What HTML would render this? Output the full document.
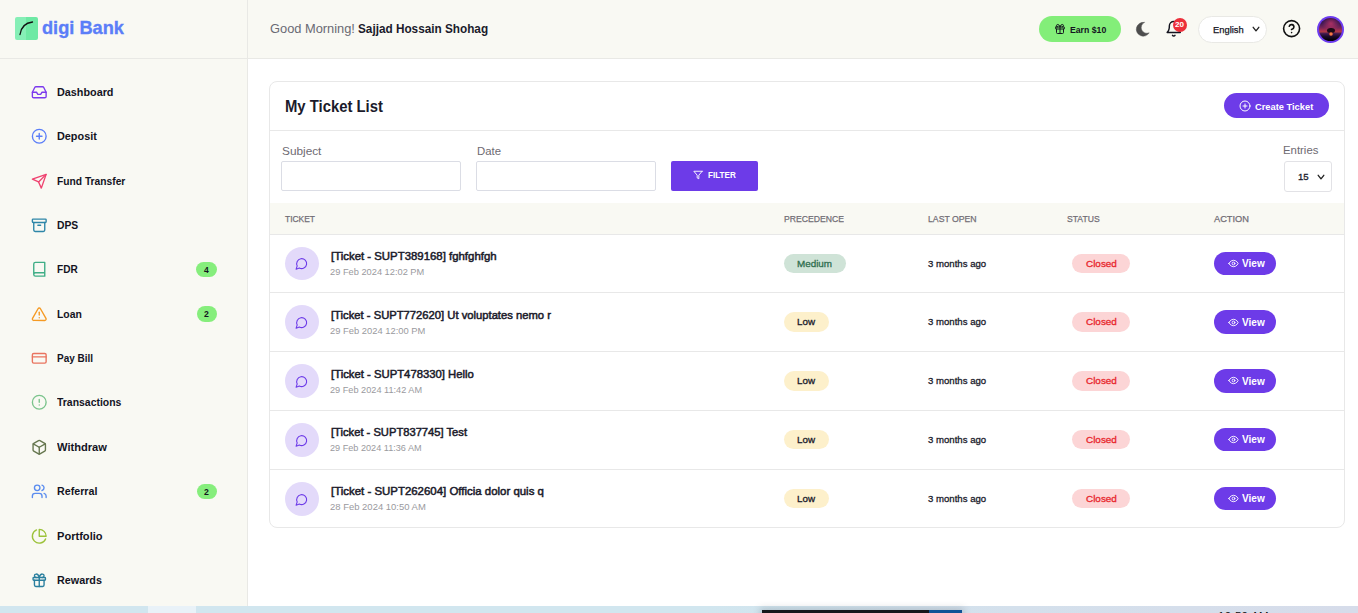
<!DOCTYPE html>
<html lang="en">
<head>
<meta charset="utf-8">
<title>My Ticket List - digi Bank</title>
<style>
*{box-sizing:border-box;margin:0;padding:0}
html,body{width:1358px;height:613px;overflow:hidden;background:#fff;font-family:"Liberation Sans",sans-serif;color:#1b1b2b}
.ic{position:absolute;display:block;fill:none;stroke:currentColor;stroke-linecap:round;stroke-linejoin:round;overflow:visible}
.fx{position:absolute;white-space:nowrap;line-height:1;display:block;transform-origin:0 50%}
b,.b{font-weight:700}
#side{position:absolute;left:0;top:0;width:248px;height:606px;background:#f9f9f3;border-right:1px solid #e9e9e5}
#logo{position:absolute;left:0;top:0;width:247px;height:59px;border-bottom:1px solid #e9e9e5}
#logo .sq{position:absolute;left:15px;top:17px;width:23px;height:23px;border-radius:2px;background:linear-gradient(90deg,#86efb6 0,#86efb6 50%,#6ee9a4 50%,#6ee9a4 100%)}
.badge{position:absolute;left:196px;width:21px;height:15px;border-radius:8px;background:#86ee7c}
#top{position:absolute;left:248px;top:0;width:1110px;height:59px;background:#f9f9f3;border-bottom:1px solid #e9e9e5}
#earn{position:absolute;left:791px;top:16px;width:82px;height:26px;border-radius:13px;background:#83ee79;color:#14141f}
#nb{position:absolute;left:924.7px;top:17.9px;width:14.6px;height:14.6px;border-radius:50%;background:#ec2f3a}
#lang{position:absolute;left:950px;top:16px;width:69px;height:27px;border-radius:13.5px;background:#fff;border:1px solid #e9e9e5}
#ava{position:absolute;left:1069px;top:16px;width:27px;height:27px;border-radius:50%;background:#6d3cf0;overflow:hidden}
#ava i{position:absolute;left:2px;top:2px;width:23px;height:23px;border-radius:50%;overflow:hidden;background:radial-gradient(ellipse 9px 8px at 52% 24%,rgba(205,55,105,.75) 0,rgba(205,55,105,0) 100%),linear-gradient(180deg,#221040 0,#3a1852 22%,#742456 42%,#a43050 54%,#b03a44 60%,#40194f 68%,#1c0b2a 80%,#07020a 94%)}
#ava i:before{content:"";position:absolute;left:7.5px;top:9.5px;width:8px;height:5.5px;border-radius:50%;background:#1a0916}
#ava i:after{content:"";position:absolute;left:9.5px;top:13.5px;width:4px;height:4px;border-radius:50%;background:radial-gradient(circle,#ffa050 0,#e8603a 45%,rgba(200,60,60,0) 100%)}
#main{position:absolute;left:248px;top:59px;width:1110px;height:547px;background:#fff}
#card{position:absolute;left:21px;top:22px;width:1076px;height:447px;border:1px solid #e8e8e8;border-radius:8px;background:#fff;overflow:hidden}
#card>*{position:absolute}
.ct{left:954px;top:11px;width:105px;height:25px;border-radius:13px;background:#6d3be8;color:#fff}
.hl{left:0;top:48px;width:1074px;height:1px;background:#e8e8e8}
.in{top:79px;width:180px;height:30px;border:1px solid #dbdde5;border-radius:2px;background:#fff}
.fb{left:401px;top:79px;width:87px;height:30px;border-radius:2px;background:#6d3be8;color:#fff}
.sel{left:1014px;top:79px;width:48px;height:31px;border:1px solid #e2e2e6;border-radius:3px;background:#fff}
.th{left:0;top:121px;width:1074px;height:32px;background:#f9f9f3;border-bottom:1px solid #e8e8e8;color:#716d75}
.row{left:0;width:1074px;border-bottom:1px solid #e8e8e8}
.row>*{position:absolute}
.av{left:15px;width:34px;height:34px;border-radius:50%;background:#e3dafa;color:#6d3be8}
.pill{border-radius:10px}
.med{left:514px;width:62px;background:#cfe3d7;color:#2f6f4f}
.low{left:514px;width:45px;background:#fdf0cb;color:#1b1b2b}
.cl{left:802px;width:58px;background:#fcd5d6;color:#e8262d}
.vw{left:944px;width:62px;border-radius:12px;background:#6d3be8;color:#fff}
#tsh{position:absolute;left:762px;top:610px;width:200px;height:8px;box-shadow:0 0 7px 2px rgba(60,70,80,.22);z-index:2}
#task{position:absolute;left:0;top:606px;width:1358px;height:7px;background:linear-gradient(90deg,#d1e6ef 0,#d1e6ef 52%,#d4e0ec 75%,#d6dcea 100%);overflow:hidden}
#task i{position:absolute;display:block}
#task .a{left:148px;top:0;width:48px;height:7px;background:#e9f2f8}
#task .d{z-index:3;left:762px;top:4px;width:167px;height:3px;background:#15171b}
#task .e{z-index:3;left:929px;top:4px;width:33px;height:3px;background:#0f5296}
#task span{position:absolute;left:1218px;top:4.500px;font-size:11.5px;line-height:1;color:#111;white-space:nowrap;letter-spacing:0.3px}
</style>
</head>
<body>
<div id="side">
  <div id="logo"><div class="sq"><svg class="ic" viewBox="0 0 23 23" style="left:0;top:0;width:23px;height:23px;stroke:#111;stroke-width:1.3"><path d="M5 17.500C6 10.500 10.500 5.800 17.500 5"/></svg></div><span class="fx " id="k_logo" style="transform:scaleX(0.9792);left:42.00px;top:18.56px;font-size:18.6px;font-weight:700;color:#5b7ef8;-webkit-text-stroke:0.35px;">digi Bank</span></div>
  <svg class="ic " viewBox="0 0 24 24" style="left:30.75px;top:83.75px;width:16.5px;height:16.5px;stroke-width:2;color:#7c3aed;"><polyline points="22 12 16 12 14 15 10 15 8 12 2 12"/><path d="M5.450 5.110 2 12v6a2 2 0 0 0 2 2h16a2 2 0 0 0 2-2v-6l-3.450-6.890A2 2 0 0 0 16.760 4H7.240a2 2 0 0 0-1.790 1.110z"/></svg>
  <span class="fx " id="k_m0" style="transform:scaleX(0.9400);left:57.00px;top:87.27px;font-size:11.5px;font-weight:700;color:#14141f;">Dashboard</span>
  <svg class="ic " viewBox="0 0 24 24" style="left:30.75px;top:127.75px;width:16.5px;height:16.5px;stroke-width:2;color:#5b7ef8;"><circle cx="12" cy="12" r="10"/><path d="M8 12h8"/><path d="M12 8v8"/></svg>
  <span class="fx " id="k_m1" style="transform:scaleX(0.9436);left:57.00px;top:131.27px;font-size:11.5px;font-weight:700;color:#14141f;">Deposit</span>
  <svg class="ic " viewBox="0 0 24 24" style="left:30.75px;top:172.75px;width:16.5px;height:16.5px;stroke-width:2;color:#ef4370;"><path d="m22 2-7 20-4-9-9-4Z"/><path d="M22 2 11 13"/></svg>
  <span class="fx " id="k_m2" style="transform:scaleX(0.8912);left:57.00px;top:176.27px;font-size:11.5px;font-weight:700;color:#14141f;">Fund Transfer</span>
  <svg class="ic " viewBox="0 0 24 24" style="left:30.75px;top:216.75px;width:16.5px;height:16.5px;stroke-width:2;color:#2e86a8;"><rect width="20" height="5" x="2" y="3" rx="1"/><path d="M4 8v11a2 2 0 0 0 2 2h12a2 2 0 0 0 2-2V8"/><path d="M10 12h4"/></svg>
  <span class="fx " id="k_m3" style="transform:scaleX(0.8968);left:57.00px;top:220.27px;font-size:11.5px;font-weight:700;color:#14141f;">DPS</span>
  <svg class="ic " viewBox="0 0 24 24" style="left:30.75px;top:260.75px;width:16.5px;height:16.5px;stroke-width:2;color:#3fae86;"><path d="M4 19.500v-15A2.500 2.500 0 0 1 6.500 2H20v20H6.500a2.500 2.500 0 0 1 0-5H20"/></svg>
  <span class="fx " id="k_m4" style="transform:scaleX(0.8746);left:57.00px;top:264.27px;font-size:11.5px;font-weight:700;color:#14141f;">FDR</span>
  <div class="badge" style="left:196px;width:21px;top:262px;height:15px"></div><span class="fx " id="k_mb4" style="transform:scaleX(1.0000);left:204.00px;top:265.80px;font-size:8.5px;font-weight:700;color:#14141f;">4</span>
  <svg class="ic " viewBox="0 0 24 24" style="left:30.75px;top:305.75px;width:16.5px;height:16.5px;stroke-width:2;color:#f59a23;"><path d="m21.730 18-8-14a2 2 0 0 0-3.480 0l-8 14A2 2 0 0 0 4 21h16a2 2 0 0 0 1.730-3Z"/><path d="M12 9v4"/><path d="M12 17h.01"/></svg>
  <span class="fx " id="k_m5" style="transform:scaleX(0.9053);left:57.00px;top:309.27px;font-size:11.5px;font-weight:700;color:#14141f;">Loan</span>
  <div class="badge" style="left:197px;width:20px;top:306px;height:16px"></div><span class="fx " id="k_mb5" style="transform:scaleX(1.0223);left:204.00px;top:310.00px;font-size:8.5px;font-weight:700;color:#14141f;">2</span>
  <svg class="ic " viewBox="0 0 24 24" style="left:30.75px;top:349.75px;width:16.5px;height:16.5px;stroke-width:2;color:#e9745f;"><rect width="20" height="14" x="2" y="5" rx="2"/><line x1="2" x2="22" y1="10" y2="10"/></svg>
  <span class="fx " id="k_m6" style="transform:scaleX(0.8670);left:57.00px;top:353.27px;font-size:11.5px;font-weight:700;color:#14141f;">Pay Bill</span>
  <svg class="ic " viewBox="0 0 24 24" style="left:30.75px;top:393.75px;width:16.5px;height:16.5px;stroke-width:2;color:#7bc48c;"><circle cx="12" cy="12" r="10"/><line x1="12" x2="12" y1="8" y2="12"/><line x1="12" x2="12.010" y1="16" y2="16"/></svg>
  <span class="fx " id="k_m7" style="transform:scaleX(0.9077);left:57.00px;top:397.27px;font-size:11.5px;font-weight:700;color:#14141f;">Transactions</span>
  <svg class="ic " viewBox="0 0 24 24" style="left:30.75px;top:438.75px;width:16.5px;height:16.5px;stroke-width:2;color:#66774f;"><path d="M21 8a2 2 0 0 0-1-1.730l-7-4a2 2 0 0 0-2 0l-7 4A2 2 0 0 0 3 8v8a2 2 0 0 0 1 1.730l7 4a2 2 0 0 0 2 0l7-4A2 2 0 0 0 21 16Z"/><path d="m3.300 7 8.700 5 8.700-5"/><path d="M12 22V12"/></svg>
  <span class="fx " id="k_m8" style="transform:scaleX(0.9670);left:57.00px;top:442.27px;font-size:11.5px;font-weight:700;color:#14141f;">Withdraw</span>
  <svg class="ic " viewBox="0 0 24 24" style="left:30.75px;top:482.75px;width:16.5px;height:16.5px;stroke-width:2;color:#5b8def;"><path d="M16 21v-2a4 4 0 0 0-4-4H6a4 4 0 0 0-4 4v2"/><circle cx="9" cy="7" r="4"/><path d="M22 21v-2a4 4 0 0 0-3-3.870"/><path d="M16 3.130a4 4 0 0 1 0 7.750"/></svg>
  <span class="fx " id="k_m9" style="transform:scaleX(0.9282);left:57.00px;top:486.27px;font-size:11.5px;font-weight:700;color:#14141f;">Referral</span>
  <div class="badge" style="left:197px;width:20px;top:484px;height:15px"></div><span class="fx " id="k_mb9" style="transform:scaleX(1.0223);left:204.00px;top:488.00px;font-size:8.5px;font-weight:700;color:#14141f;">2</span>
  <svg class="ic " viewBox="0 0 24 24" style="left:30.75px;top:527.75px;width:16.5px;height:16.5px;stroke-width:2;color:#9cc23a;"><path d="M21.210 15.890A10 10 0 1 1 8 2.830"/><path d="M22 12A10 10 0 0 0 12 2v10z"/></svg>
  <span class="fx " id="k_m10" style="transform:scaleX(0.9641);left:57.00px;top:531.27px;font-size:11.5px;font-weight:700;color:#14141f;">Portfolio</span>
  <svg class="ic " viewBox="0 0 24 24" style="left:30.75px;top:571.75px;width:16.5px;height:16.5px;stroke-width:2;color:#2a7f9e;"><rect x="3" y="8" width="18" height="4" rx="1"/><path d="M12 8v13"/><path d="M19 12v7a2 2 0 0 1-2 2H7a2 2 0 0 1-2-2v-7"/><path d="M7.500 8a2.500 2.500 0 0 1 0-5A4.800 8 0 0 1 12 8a4.800 8 0 0 1 4.500-5 2.500 2.500 0 0 1 0 5"/></svg>
  <span class="fx " id="k_m11" style="transform:scaleX(0.9377);left:57.00px;top:575.27px;font-size:11.5px;font-weight:700;color:#14141f;">Rewards</span>
</div>
<div id="top">
  <span class="fx " id="k_g1" style="transform:scaleX(0.9878);left:22.00px;top:22.00px;font-size:13px;color:#6a6a74;">Good Morning!</span>
  <span class="fx " id="k_g2" style="transform:scaleX(0.9049);left:110.00px;top:22.00px;font-size:13px;font-weight:700;color:#1b1b2b;">Sajjad Hossain Shohag</span>
  <div id="earn"><svg class="ic " viewBox="0 0 24 24" style="left:15.00px;top:6.80px;width:12px;height:12px;stroke-width:2;"><rect x="3" y="8" width="18" height="4" rx="1"/><path d="M12 8v13"/><path d="M19 12v7a2 2 0 0 1-2 2H7a2 2 0 0 1-2-2v-7"/><path d="M7.500 8a2.500 2.500 0 0 1 0-5A4.800 8 0 0 1 12 8a4.800 8 0 0 1 4.500-5 2.500 2.500 0 0 1 0 5"/></svg><span class="fx " id="k_earn" style="transform:scaleX(0.8865);left:31.00px;top:8.70px;font-size:9.8px;font-weight:700;">Earn $10</span></div>
  <svg class="ic" viewBox="0 0 24 24" style="left:886.05px;top:19.65px;width:18.5px;height:18.5px;fill:#4d4d4d;stroke:#4d4d4d;stroke-width:0.6"><path d="M13.350 3.100A9 9 0 1 0 19.690 16.680 7.500 7.500 0 0 1 13.350 3.100Z"/></svg>
  <svg class="ic " viewBox="0 0 24 24" style="left:917.15px;top:19.95px;width:17.5px;height:17.5px;stroke-width:2;color:#14141f;"><path d="M6 8a6 6 0 0 1 12 0c0 7 3 9 3 9H3s3-2 3-9"/><path d="M10.300 21a1.940 1.940 0 0 0 3.400 0"/></svg>
  <div id="nb"></div><span class="fx " id="k_nb20" style="transform:scaleX(1.1500);left:927.00px;top:21.37px;font-size:7px;font-weight:700;color:#fff;">20</span>
  <div id="lang"><span class="fx " id="k_lang" style="transform:scaleX(0.9740);left:14.00px;top:7.97px;font-size:9.6px;color:#14141f;-webkit-text-stroke:0.25px;">English</span><svg class="ic" viewBox="0 0 10 8" style="left:51.50px;top:7.70px;width:10px;height:8px;stroke-width:1.35;color:#222"><path d="M2.200 2.300 5 5.800 7.800 2.300"/></svg></div>
  <svg class="ic " viewBox="0 0 24 24" style="left:1034.10px;top:19.20px;width:19.2px;height:19.2px;stroke-width:2;color:#111;"><circle cx="12" cy="12" r="10"/><path d="M9.090 9a3 3 0 0 1 5.830 1c0 2-3 3-3 3"/><path d="M12 17h.01"/></svg>
  <div id="ava"><i></i></div>
</div>
<div id="main">
  <div id="card">
    <span class="fx " id="k_title" style="transform:scaleX(0.9274);left:15.00px;top:17.36px;font-size:16px;font-weight:700;">My Ticket List</span>
    <div class="ct"><svg class="ic " viewBox="0 0 24 24" style="left:14.70px;top:7.00px;width:12px;height:12px;stroke-width:2;"><circle cx="12" cy="12" r="10"/><path d="M8 12h8"/><path d="M12 8v8"/></svg><span class="fx " id="k_create" style="transform:scaleX(0.9786);left:31.00px;top:9.36px;font-size:9.5px;font-weight:700;">Create Ticket</span></div>
    <div class="hl"></div>
    <span class="fx " id="k_lsub" style="transform:scaleX(1.0740);left:12.00px;top:64.49px;font-size:11px;color:#6e6a72;">Subject</span>
    <div class="in" style="left:11px"></div>
    <span class="fx " id="k_ldate" style="transform:scaleX(1.0332);left:207.00px;top:64.49px;font-size:11px;color:#6e6a72;">Date</span>
    <div class="in" style="left:206px"></div>
    <div class="fb"><svg class="ic " viewBox="0 0 24 24" style="left:22.20px;top:8.80px;width:10px;height:10px;stroke-width:2.2;"><polygon points="22 3 2 3 10 12.460 10 19 14 21 14 12.460 22 3"/></svg><span class="fx " id="k_filter" style="transform:scaleX(0.9370);left:37.00px;top:9.94px;font-size:8.7px;font-weight:700;">FILTER</span></div>
    <span class="fx " id="k_lent" style="transform:scaleX(1.0342);left:1013.00px;top:62.69px;font-size:11px;color:#6e6a72;">Entries</span>
    <div class="sel"><span class="fx " id="k_s15" style="transform:scaleX(0.9952);left:13.00px;top:10.39px;font-size:9.7px;color:#1b1b2b;-webkit-text-stroke:0.3px;">15</span><svg class="ic" viewBox="0 0 10 8" style="left:30.50px;top:10.70px;width:10px;height:8px;stroke-width:1.35;color:#222"><path d="M2.200 2.300 5 5.800 7.800 2.300"/></svg></div>
    <div class="th"><span class="fx " id="k_th0" style="transform:scaleX(0.8886);left:15.00px;top:10.96px;font-size:9.5px;-webkit-text-stroke:0.25px;">TICKET</span><span class="fx " id="k_th1" style="transform:scaleX(0.9082);left:514.00px;top:10.96px;font-size:9.5px;-webkit-text-stroke:0.25px;">PRECEDENCE</span><span class="fx " id="k_th2" style="transform:scaleX(0.9154);left:658.00px;top:10.96px;font-size:9.5px;-webkit-text-stroke:0.25px;">LAST OPEN</span><span class="fx " id="k_th3" style="transform:scaleX(0.9058);left:797.00px;top:10.96px;font-size:9.5px;-webkit-text-stroke:0.25px;">STATUS</span><span class="fx " id="k_th4" style="transform:scaleX(0.9752);left:944.00px;top:10.96px;font-size:9.5px;-webkit-text-stroke:0.25px;">ACTION</span></div>
    <div class="row" style="top:153px;height:58px"><div class="av" style="top:12px;height:33px"><svg class="ic " viewBox="0 0 24 24" style="left:10.35px;top:10.15px;width:13.3px;height:13.3px;stroke-width:2;"><path d="M7.900 20A9 9 0 1 0 4 16.100L2 22Z"/></svg></div><span class="fx " id="k_t0" style="transform:scaleX(1.0361);left:61.00px;top:15.69px;font-size:11px;-webkit-text-stroke:0.5px;">[Ticket - SUPT389168] fghfghfgh</span><span class="fx " id="k_d0" style="transform:scaleX(0.9966);left:60.00px;top:33.13px;font-size:9.3px;color:#9a9a9e;">29 Feb 2024 12:02 PM</span><div class="pill med" style="top:19px;height:19px"><span class="fx " id="k_p0" style="transform:scaleX(1.0380);left:13.00px;top:4.96px;font-size:9.5px;-webkit-text-stroke:0.3px;">Medium</span></div><span class="fx " id="k_a0" style="transform:scaleX(1.0102);left:658.00px;top:23.96px;font-size:9.5px;-webkit-text-stroke:0.3px;">3 months ago</span><div class="pill cl" style="top:19px;height:19px"><span class="fx " id="k_c0" style="transform:scaleX(1.0436);left:14.00px;top:4.96px;font-size:9.5px;-webkit-text-stroke:0.3px;">Closed</span></div><div class="vw" style="top:17px;height:23px"><svg class="ic " viewBox="0 0 24 24" style="left:13.50px;top:6.00px;width:11px;height:11px;stroke-width:2;"><path d="M2 12s3-7 10-7 10 7 10 7-3 7-10 7-10-7-10-7Z"/><circle cx="12" cy="12" r="3"/></svg><span class="fx " id="k_v0" style="transform:scaleX(0.9744);left:28.00px;top:7.28px;font-size:10.3px;font-weight:700;">View</span></div></div>
    <div class="row" style="top:211px;height:59px"><div class="av" style="top:12px"><svg class="ic " viewBox="0 0 24 24" style="left:10.35px;top:10.75px;width:13.3px;height:13.3px;stroke-width:2;"><path d="M7.900 20A9 9 0 1 0 4 16.100L2 22Z"/></svg></div><span class="fx " id="k_t1" style="transform:scaleX(1.0210);left:61.00px;top:16.69px;font-size:11px;-webkit-text-stroke:0.5px;">[Ticket - SUPT772620] Ut voluptates nemo r</span><span class="fx " id="k_d1" style="transform:scaleX(1.0088);left:60.00px;top:34.13px;font-size:9.3px;color:#9a9a9e;">29 Feb 2024 12:00 PM</span><div class="pill low" style="top:19px;height:20px"><span class="fx " id="k_p1" style="transform:scaleX(1.0336);left:13.00px;top:4.96px;font-size:9.5px;-webkit-text-stroke:0.3px;">Low</span></div><span class="fx " id="k_a1" style="transform:scaleX(1.0102);left:658.00px;top:23.96px;font-size:9.5px;-webkit-text-stroke:0.3px;">3 months ago</span><div class="pill cl" style="top:19px;height:20px"><span class="fx " id="k_c1" style="transform:scaleX(1.0436);left:14.00px;top:4.96px;font-size:9.5px;-webkit-text-stroke:0.3px;">Closed</span></div><div class="vw" style="top:17px;height:24px"><svg class="ic " viewBox="0 0 24 24" style="left:13.50px;top:6.70px;width:11px;height:11px;stroke-width:2;"><path d="M2 12s3-7 10-7 10 7 10 7-3 7-10 7-10-7-10-7Z"/><circle cx="12" cy="12" r="3"/></svg><span class="fx " id="k_v1" style="transform:scaleX(0.9744);left:28.00px;top:8.28px;font-size:10.3px;font-weight:700;">View</span></div></div>
    <div class="row" style="top:270px;height:59px"><div class="av" style="top:12px"><svg class="ic " viewBox="0 0 24 24" style="left:10.35px;top:10.75px;width:13.3px;height:13.3px;stroke-width:2;"><path d="M7.900 20A9 9 0 1 0 4 16.100L2 22Z"/></svg></div><span class="fx " id="k_t2" style="transform:scaleX(1.0281);left:61.00px;top:16.69px;font-size:11px;-webkit-text-stroke:0.5px;">[Ticket - SUPT478330] Hello</span><span class="fx " id="k_d2" style="transform:scaleX(0.9864);left:60.00px;top:34.13px;font-size:9.3px;color:#9a9a9e;">29 Feb 2024 11:42 AM</span><div class="pill low" style="top:19px;height:20px"><span class="fx " id="k_p2" style="transform:scaleX(1.0336);left:13.00px;top:4.96px;font-size:9.5px;-webkit-text-stroke:0.3px;">Low</span></div><span class="fx " id="k_a2" style="transform:scaleX(1.0102);left:658.00px;top:23.96px;font-size:9.5px;-webkit-text-stroke:0.3px;">3 months ago</span><div class="pill cl" style="top:19px;height:20px"><span class="fx " id="k_c2" style="transform:scaleX(1.0436);left:14.00px;top:4.96px;font-size:9.5px;-webkit-text-stroke:0.3px;">Closed</span></div><div class="vw" style="top:17px;height:24px"><svg class="ic " viewBox="0 0 24 24" style="left:13.50px;top:6.40px;width:11px;height:11px;stroke-width:2;"><path d="M2 12s3-7 10-7 10 7 10 7-3 7-10 7-10-7-10-7Z"/><circle cx="12" cy="12" r="3"/></svg><span class="fx " id="k_v2" style="transform:scaleX(0.9744);left:28.00px;top:8.28px;font-size:10.3px;font-weight:700;">View</span></div></div>
    <div class="row" style="top:329px;height:59px"><div class="av" style="top:12px"><svg class="ic " viewBox="0 0 24 24" style="left:10.35px;top:10.75px;width:13.3px;height:13.3px;stroke-width:2;"><path d="M7.900 20A9 9 0 1 0 4 16.100L2 22Z"/></svg></div><span class="fx " id="k_t3" style="transform:scaleX(1.0157);left:61.00px;top:15.69px;font-size:11px;-webkit-text-stroke:0.5px;">[Ticket - SUPT837745] Test</span><span class="fx " id="k_d3" style="transform:scaleX(0.9812);left:60.00px;top:33.13px;font-size:9.3px;color:#9a9a9e;">29 Feb 2024 11:36 AM</span><div class="pill low" style="top:19px;height:19px"><span class="fx " id="k_p3" style="transform:scaleX(1.0336);left:13.00px;top:4.96px;font-size:9.5px;-webkit-text-stroke:0.3px;">Low</span></div><span class="fx " id="k_a3" style="transform:scaleX(1.0102);left:658.00px;top:23.96px;font-size:9.5px;-webkit-text-stroke:0.3px;">3 months ago</span><div class="pill cl" style="top:19px;height:19px"><span class="fx " id="k_c3" style="transform:scaleX(1.0436);left:14.00px;top:4.96px;font-size:9.5px;-webkit-text-stroke:0.3px;">Closed</span></div><div class="vw" style="top:17px;height:23px"><svg class="ic " viewBox="0 0 24 24" style="left:13.50px;top:6.10px;width:11px;height:11px;stroke-width:2;"><path d="M2 12s3-7 10-7 10 7 10 7-3 7-10 7-10-7-10-7Z"/><circle cx="12" cy="12" r="3"/></svg><span class="fx " id="k_v3" style="transform:scaleX(0.9744);left:28.00px;top:7.28px;font-size:10.3px;font-weight:700;">View</span></div></div>
    <div class="row" style="top:388px;height:58px;border-bottom:none"><div class="av" style="top:12px"><svg class="ic " viewBox="0 0 24 24" style="left:10.35px;top:10.75px;width:13.3px;height:13.3px;stroke-width:2;"><path d="M7.900 20A9 9 0 1 0 4 16.100L2 22Z"/></svg></div><span class="fx " id="k_t4" style="transform:scaleX(1.0395);left:61.00px;top:15.69px;font-size:11px;-webkit-text-stroke:0.5px;">[Ticket - SUPT262604] Officia dolor quis q</span><span class="fx " id="k_d4" style="transform:scaleX(1.0181);left:60.00px;top:33.13px;font-size:9.3px;color:#9a9a9e;">28 Feb 2024 10:50 AM</span><div class="pill low" style="top:19px;height:19px"><span class="fx " id="k_p4" style="transform:scaleX(1.0336);left:13.00px;top:4.96px;font-size:9.5px;-webkit-text-stroke:0.3px;">Low</span></div><span class="fx " id="k_a4" style="transform:scaleX(1.0102);left:658.00px;top:23.96px;font-size:9.5px;-webkit-text-stroke:0.3px;">3 months ago</span><div class="pill cl" style="top:19px;height:19px"><span class="fx " id="k_c4" style="transform:scaleX(1.0436);left:14.00px;top:4.96px;font-size:9.5px;-webkit-text-stroke:0.3px;">Closed</span></div><div class="vw" style="top:17px;height:23px"><svg class="ic " viewBox="0 0 24 24" style="left:13.50px;top:5.80px;width:11px;height:11px;stroke-width:2;"><path d="M2 12s3-7 10-7 10 7 10 7-3 7-10 7-10-7-10-7Z"/><circle cx="12" cy="12" r="3"/></svg><span class="fx " id="k_v4" style="transform:scaleX(0.9744);left:28.00px;top:7.28px;font-size:10.3px;font-weight:700;">View</span></div></div>
  </div>
</div>
<div id="tsh"></div>
<div id="task"><i class="a"></i><i class="d"></i><i class="e"></i><span>10:50 AM</span></div>
</body>
</html>
